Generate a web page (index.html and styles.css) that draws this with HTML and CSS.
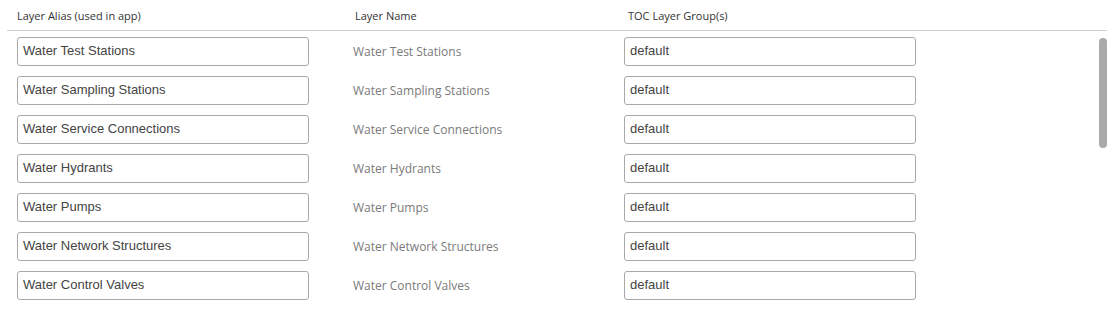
FILE: index.html
```html
<!DOCTYPE html>
<html>
<head>
<meta charset="utf-8">
<link rel="stylesheet" href="styles.css">
</head>
<body>
<div class="panel">
  <div class="head">
    <div class="h h1">Layer Alias (used in app)</div>
    <div class="h h2">Layer Name</div>
    <div class="h h3">TOC Layer Group(s)</div>
  </div>
  <div class="list">
    <div class="row"><input class="field" value="Water Test Stations"><span class="name">Water Test Stations</span><input class="field" value="default"></div>
    <div class="row"><input class="field" value="Water Sampling Stations"><span class="name">Water Sampling Stations</span><input class="field" value="default"></div>
    <div class="row"><input class="field" value="Water Service Connections"><span class="name">Water Service Connections</span><input class="field" value="default"></div>
    <div class="row"><input class="field" value="Water Hydrants"><span class="name">Water Hydrants</span><input class="field" value="default"></div>
    <div class="row"><input class="field" value="Water Pumps"><span class="name">Water Pumps</span><input class="field" value="default"></div>
    <div class="row"><input class="field" value="Water Network Structures"><span class="name">Water Network Structures</span><input class="field" value="default"></div>
    <div class="row"><input class="field" value="Water Control Valves"><span class="name">Water Control Valves</span><input class="field" value="default"></div>
    <div class="thumb"></div>
  </div>
</div>
</body>
</html>
```
FILE: styles.css
```css
html, body {
  margin: 0;
  padding: 0;
  background: #fff;
}
.panel {
  width: 1100px;
  margin-left: 7px;
  height: 310px;
  overflow: hidden;
}
.head {
  display: grid;
  grid-template-columns: 336px 271px 292px;
  padding-left: 10px;
  height: 30px;
  align-items: center;
  border-bottom: 1px solid #cfcfcf;
  font-family: "Open Sans", sans-serif;
  font-size: 11px;
  color: #333;
}
.h2 { padding-left: 2px; }
.h3 { padding-left: 4px; }
.list {
  position: relative;
  padding-top: 6px;
  padding-left: 10px;
  display: flex;
  flex-direction: column;
  gap: 10px;
}
.row {
  display: grid;
  grid-template-columns: 336px 271px 292px;
  align-items: center;
}
.field {
  box-sizing: border-box;
  width: 292px;
  height: 29px;
  margin: 0;
  border: 1px solid #a9a9a9;
  border-radius: 3px;
  padding: 0 5px 2px;
  font-family: "Liberation Sans", Arial, sans-serif;
  font-size: 13px;
  color: #444;
  background: #fff;
  outline: none;
}
.name {
  font-family: "Open Sans", sans-serif;
  font-size: 12px;
  color: #7a7a7a;
}
.thumb {
  position: absolute;
  left: 1092px;
  top: 7px;
  width: 8px;
  height: 110px;
  border-radius: 4px;
  background: #aaaaaa;
}
```
